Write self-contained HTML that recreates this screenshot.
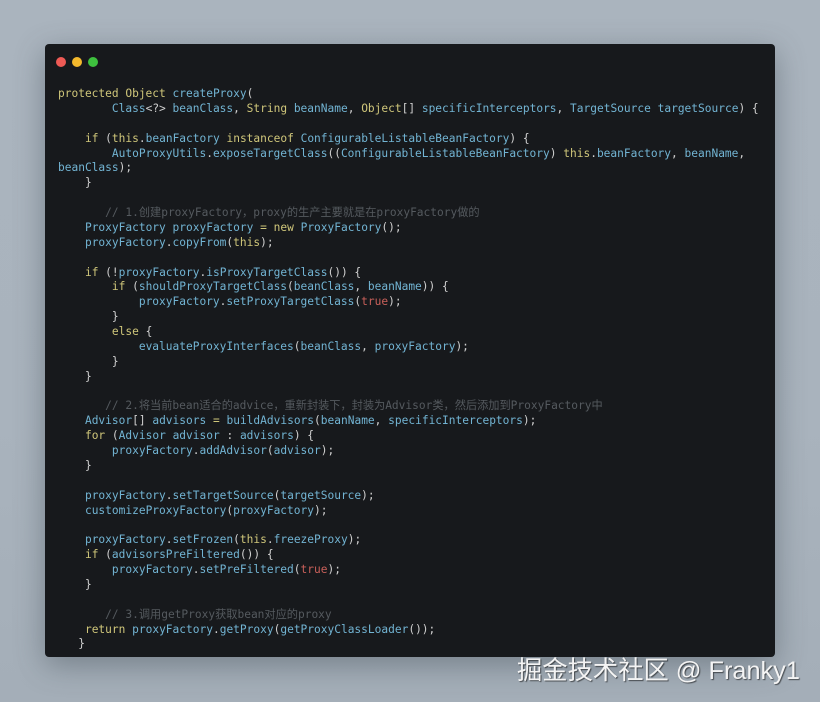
<!DOCTYPE html>
<html><head><meta charset="utf-8"><style>
html,body{margin:0;padding:0}
body{width:820px;height:702px;overflow:hidden;background:linear-gradient(180deg,#aab4be 0%,#a9b3bd 60%,#a4aeb8 100%);position:relative;font-family:"Liberation Sans",sans-serif}
.win{position:absolute;left:45px;top:44px;width:730px;height:613px;background:#17191c;border-radius:4px;box-shadow:0 8px 30px rgba(60,70,80,.45)}
.dot{position:absolute;top:13px;width:10px;height:10px;border-radius:50%}
pre{position:absolute;left:13px;top:43px;margin:0;font-family:"DejaVu Sans Mono","Noto Sans CJK SC",monospace;font-size:11.2px;line-height:14.87px;color:#cfcfcf;white-space:pre}
.k{color:#cfc67a}.i{color:#72b4d3}.t{color:#c9605a}.c{color:#555a5f}
.wm{position:absolute;left:517px;top:651px;font-size:25.3px;color:#f4f4f4;text-shadow:1px 1px 1px rgba(0,0,0,.55);font-family:"Liberation Sans","Noto Sans CJK SC",sans-serif;letter-spacing:0px}
</style></head><body>
<div class="win">
<div class="dot" style="left:11px;background:#ee5a55"></div>
<div class="dot" style="left:27px;background:#f4b92c"></div>
<div class="dot" style="left:43px;background:#3ec13e"></div>
<pre><span class="k">protected Object</span> <span class="i">createProxy</span>(
        <span class="i">Class</span>&lt;?&gt; <span class="i">beanClass</span>, <span class="k">String</span> <span class="i">beanName</span>, <span class="k">Object</span>[] <span class="i">specificInterceptors</span>, <span class="i">TargetSource</span> <span class="i">targetSource</span>) {

    <span class="k">if</span> (<span class="k">this</span>.<span class="i">beanFactory</span> <span class="k">instanceof</span> <span class="i">ConfigurableListableBeanFactory</span>) {
        <span class="i">AutoProxyUtils</span>.<span class="i">exposeTargetClass</span>((<span class="i">ConfigurableListableBeanFactory</span>) <span class="k">this</span>.<span class="i">beanFactory</span>, <span class="i">beanName</span>,
<span class="i">beanClass</span>);
    }

       <span class="c">// 1.创建proxyFactory，proxy的生产主要就是在proxyFactory做的</span>
    <span class="i">ProxyFactory</span> <span class="i">proxyFactory</span> <span class="k">=</span> <span class="k">new</span> <span class="i">ProxyFactory</span>();
    <span class="i">proxyFactory</span>.<span class="i">copyFrom</span>(<span class="k">this</span>);

    <span class="k">if</span> (!<span class="i">proxyFactory</span>.<span class="i">isProxyTargetClass</span>()) {
        <span class="k">if</span> (<span class="i">shouldProxyTargetClass</span>(<span class="i">beanClass</span>, <span class="i">beanName</span>)) {
            <span class="i">proxyFactory</span>.<span class="i">setProxyTargetClass</span>(<span class="t">true</span>);
        }
        <span class="k">else</span> {
            <span class="i">evaluateProxyInterfaces</span>(<span class="i">beanClass</span>, <span class="i">proxyFactory</span>);
        }
    }

       <span class="c">// 2.将当前bean适合的advice，重新封装下，封装为Advisor类，然后添加到ProxyFactory中</span>
    <span class="i">Advisor</span>[] <span class="i">advisors</span> <span class="k">=</span> <span class="i">buildAdvisors</span>(<span class="i">beanName</span>, <span class="i">specificInterceptors</span>);
    <span class="k">for</span> (<span class="i">Advisor</span> <span class="i">advisor</span> : <span class="i">advisors</span>) {
        <span class="i">proxyFactory</span>.<span class="i">addAdvisor</span>(<span class="i">advisor</span>);
    }

    <span class="i">proxyFactory</span>.<span class="i">setTargetSource</span>(<span class="i">targetSource</span>);
    <span class="i">customizeProxyFactory</span>(<span class="i">proxyFactory</span>);

    <span class="i">proxyFactory</span>.<span class="i">setFrozen</span>(<span class="k">this</span>.<span class="i">freezeProxy</span>);
    <span class="k">if</span> (<span class="i">advisorsPreFiltered</span>()) {
        <span class="i">proxyFactory</span>.<span class="i">setPreFiltered</span>(<span class="t">true</span>);
    }

       <span class="c">// 3.调用getProxy获取bean对应的proxy</span>
    <span class="k">return</span> <span class="i">proxyFactory</span>.<span class="i">getProxy</span>(<span class="i">getProxyClassLoader</span>());
   }</pre>
</div>
<div class="wm">掘金技术社区 @ Franky1</div>
</body></html>
